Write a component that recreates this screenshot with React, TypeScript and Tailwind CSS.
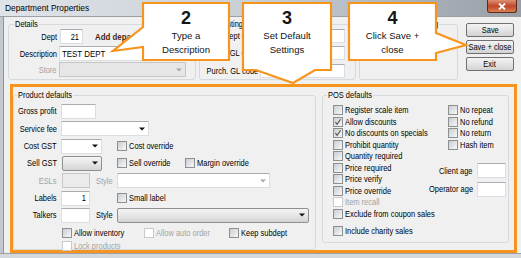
import React from "react";

const FONT = "font-['Liberation_Sans',Arial,sans-serif]";

function T({ children, o = "left", className = "" }: { children?: React.ReactNode; o?: "left" | "right" | "center"; className?: string }) {
  return (
    <span
      className={
        "inline-block shrink-0 whitespace-nowrap scale-x-[0.83] " +
        (o === "right" ? "origin-right " : o === "center" ? "origin-center " : "origin-left ") +
        className
      }
    >
      {children}
    </span>
  );
}

function Lbl({ text, w, disabled = false }: { text: string; w: string; disabled?: boolean }) {
  return (
    <span className={"shrink-0 flex justify-end " + w + (disabled ? " text-[#a3a3a3]" : " text-black")}>
      <T o="right">{text}</T>
    </span>
  );
}

function Cb({ checked = false, disabled = false }: { checked?: boolean; disabled?: boolean }) {
  return (
    <span
      className={
        disabled
          ? "relative block w-[10px] h-[10px] shrink-0 border border-[#c9c9c9] bg-white"
          : "relative block w-[10px] h-[10px] shrink-0 border border-[#8e8f8f] bg-linear-to-br from-[#c9cdd3] to-[#f8f8f8]"
      }
    >
      {checked && (
        <svg className="absolute left-0 top-0" width="8" height="8" viewBox="0 0 8 8">
          <path d="M1.4 4.2 L3.1 6.4 L6.6 1.2" stroke="#505050" strokeWidth="1.1" fill="none" />
        </svg>
      )}
    </span>
  );
}

function Check({
  label,
  checked,
  disabled,
  className = "",
}: {
  label: string;
  checked?: boolean;
  disabled?: boolean;
  className?: string;
}) {
  return (
    <div className={"flex items-center gap-[2px] whitespace-nowrap " + className}>
      <Cb checked={checked} disabled={disabled} />
      <T className={disabled ? "text-[#a3a3a3]" : "text-black"}>{label}</T>
    </div>
  );
}

function Arrow({ grey = false }: { grey?: boolean }) {
  return (
    <svg width="6" height="4" viewBox="0 0 6 4">
      <path d="M0 0.5H6L3 3.5Z" fill={grey ? "#a9a9a9" : "#111"} />
    </svg>
  );
}

function TextBox({ className = "", value, disabled = false }: { className?: string; value?: string; disabled?: boolean }) {
  return (
    <div
      className={
        (disabled
          ? "bg-[#ebebeb] border border-[#c8c8c8] "
          : "bg-white border border-[#dadde3] border-t-[#abadb3] ") +
        "h-[15px] shrink-0 flex items-center justify-end pr-[3px] " +
        className
      }
    >
      {value && <T o="right">{value}</T>}
    </div>
  );
}

function Combo({ className = "", grey = false, fill = false }: { className?: string; grey?: boolean; fill?: boolean }) {
  return (
    <div
      className={
        (fill ? "bg-[#e6e6e6] border border-[#c6c6c6] " : "bg-white border border-[#dadde3] border-t-[#abadb3] ") +
        "h-[15px] shrink-0 flex items-center justify-end pr-[3px] " +
        className
      }
    >
      <Arrow grey={grey} />
    </div>
  );
}

function BtnCombo({ className = "" }: { className?: string }) {
  return (
    <div
      className={
        "h-[15px] shrink-0 flex items-center justify-end pr-[3px] rounded-[2px] border border-[#8e8f8f] bg-linear-to-b from-[#f4f4f4] via-[#e6e6e6] to-[#d4d4d4] " +
        className
      }
    >
      <Arrow />
    </div>
  );
}

function Button({ label }: { label: string }) {
  return (
    <div className="w-[48px] h-[14px] flex items-center justify-center rounded-[2px] border border-[#707070] bg-linear-to-b from-[#f3f3f3] via-[#e5e5e5] to-[#d2d2d2] text-black">
      <T o="center">{label}</T>
    </div>
  );
}

function Row({ label, disabled = false, children }: { label: string; disabled?: boolean; children?: React.ReactNode }) {
  return (
    <div className="h-[17.33px] flex items-center">
      <Lbl text={label} w="w-[43px]" disabled={disabled} />
      <div className="ml-[4px] flex items-center">{children}</div>
    </div>
  );
}

function Legend({ text, w, className = "" }: { text: string; w: string; className?: string }) {
  return (
    <legend className={"px-[1px] leading-[10px] " + className}>
      <span className={"block h-[10px] " + w}>
        <T>{text}</T>
      </span>
    </legend>
  );
}

function Callouts() {
  const o = "#f7941d";
  return (
    <div className="absolute inset-0 pointer-events-none">
      <svg className="absolute left-0 top-0" width="521" height="258" viewBox="0 0 521 258">
        <path d="M143,3 H229 V60 H143 V47 L113,51 L143,27 Z" fill="#fff" stroke={o} strokeWidth="2.2" strokeLinejoin="miter" />
        <path d="M243,3 H331 V70 H315 L293,83 L256,70 H243 Z" fill="#fff" stroke={o} strokeWidth="2.2" strokeLinejoin="miter" />
        <path d="M349,3 H436 V33 L466,45 L436,53 V60 H349 Z" fill="#fff" stroke={o} strokeWidth="2.2" strokeLinejoin="miter" />
      </svg>
      <div className="absolute left-[143px] top-[7px] w-[86px] flex flex-col items-center font-['Liberation_Sans',Arial,sans-serif] text-[#151515]">
        <span className="text-[18px] leading-[22px] font-bold">2</span>
        <span className="text-[9.6px] leading-[14px]">Type a</span>
        <span className="text-[9.6px] leading-[14px]">Description</span>
      </div>
      <div className="absolute left-[243px] top-[7px] w-[88px] flex flex-col items-center font-['Liberation_Sans',Arial,sans-serif] text-[#151515]">
        <span className="text-[18px] leading-[22px] font-bold">3</span>
        <span className="text-[9.6px] leading-[14px]">Set Default</span>
        <span className="text-[9.6px] leading-[14px]">Settings</span>
      </div>
      <div className="absolute left-[349px] top-[7px] w-[87px] flex flex-col items-center font-['Liberation_Sans',Arial,sans-serif] text-[#151515]">
        <span className="text-[18px] leading-[22px] font-bold">4</span>
        <span className="text-[9.6px] leading-[14px]">Click Save +</span>
        <span className="text-[9.6px] leading-[13px]">close</span>
      </div>
    </div>
  );
}

export default function App() {
  return (
    <div className={"relative w-[521px] h-[258px] overflow-hidden bg-[#f0f0f0] text-[9px] leading-[10px] text-black " + FONT}>
      {/* Title bar */}
      <div className="h-[17px] flex items-center justify-between bg-linear-to-r from-[#dfe4e9] via-[#c8ced5] to-[#979ea6] border-b border-[#9aa0a6]">
        <span className="pl-[5px] text-[9.5px] text-black">
          <span className="inline-block whitespace-nowrap origin-left scale-x-[0.88]">Department Properties</span>
        </span>
        <div className="self-start mr-[4px] w-[30px] h-[13px] rounded-b-[3px] border border-t-0 border-[#5e2a1c] bg-linear-to-b from-[#dc9070] via-[#c0452b] to-[#d9804f] flex items-center justify-center">
          <svg width="8" height="7" viewBox="0 0 8 7">
            <path d="M1 0.5 L7 6.5 M7 0.5 L1 6.5" stroke="#fff" strokeWidth="1.8" />
          </svg>
        </div>
      </div>

      {/* Body */}
      <div className="flex h-[236px]">
        <div className="w-[4px] shrink-0 bg-[#c3c8ce] border-r border-[#8d9298]" />
        <div className="flex-1 flex flex-col">
          {/* Top section */}
          <div className="h-[67px] flex items-start">
            <fieldset className="ml-[4px] mt-[2px] w-[188px] h-[61px] border border-[#d5dadf] rounded-[3px]">
              <Legend text="Details" w="w-[23px]" className="ml-[5px]" />
              <div className="flex items-center h-[15px]">
                <Lbl text="Dept" w="w-[48px]" />
                <TextBox className="ml-[3px] w-[23px]" value="21" />
                <span className="ml-[12px] font-bold text-[9.5px] text-[#4a2410]"><T>Add department</T></span>
              </div>
              <div className="flex items-center h-[15px] mt-[2px]">
                <Lbl text="Description" w="w-[48px]" />
                <div className="ml-[2px] w-[127px] h-[15px] bg-white border border-[#dadde3] border-t-[#abadb3] flex items-center pl-[2px] text-[9.5px]">
                  <T>TEST DEPT</T>
                </div>
              </div>
              <div className="flex items-center h-[15px] mt-[1px]">
                <Lbl text="Store" w="w-[48px]" disabled />
                <Combo className="ml-[2px] w-[127px]" grey fill />
              </div>
            </fieldset>

            <fieldset className="ml-[3px] mt-[2px] w-[157px] h-[61px] border border-[#d5dadf] rounded-[3px]">
              <Legend text="Accounting" w="w-[37px]" className="ml-[5px]" />
              <div className="flex items-center h-[14px]">
                <Lbl text="Dept code" w="w-[58px]" />
                <TextBox className="ml-[2px] w-[85px] !h-[14px]" />
              </div>
              <div className="flex items-center h-[14px] mt-[3px]">
                <Lbl text="Sales GL code" w="w-[58px]" />
                <TextBox className="ml-[2px] w-[85px] !h-[14px]" />
              </div>
              <div className="flex items-center h-[14px] mt-[4px]">
                <Lbl text="Purch. GL code" w="w-[58px]" />
                <TextBox className="ml-[2px] w-[85px] !h-[14px]" />
              </div>
            </fieldset>

            <fieldset className="ml-[3px] mt-[2px] w-[99px] h-[61px] border border-[#d5dadf] rounded-[3px]">
              <Legend text="Ordering" w="w-[29px]" className="ml-[48px]" />
            </fieldset>

            <div className="ml-[8px] mt-[6px] flex flex-col gap-[3px]">
              <Button label="Save" />
              <Button label="Save + close" />
              <Button label="Exit" />
            </div>
          </div>

          {/* Orange highlighted area */}
          <div className="ml-[6px] w-[507px] h-[169px] border-[3px] border-[#f7941d] flex items-start pt-[3px]">
            <fieldset className="w-[303px] h-[160px] border border-[#d5dadf] rounded-[3px]">
              <Legend text="Product defaults" w="w-[54px]" className="ml-[3px]" />
              <div className="flex flex-col pt-[2.8px]">
                <Row label="Gross profit">
                  <TextBox className="w-[35px]" />
                </Row>
                <Row label="Service fee">
                  <Combo className="w-[88px]" />
                </Row>
                <Row label="Cost GST">
                  <Combo className="w-[41px]" />
                  <Check className="ml-[15px]" label="Cost override" />
                </Row>
                <Row label="Sell GST">
                  <BtnCombo className="w-[40px] ml-[1px]" />
                  <Check className="ml-[15px] w-[68px]" label="Sell override" />
                  <Check label="Margin override" />
                </Row>
                <Row label="ESLs" disabled>
                  <TextBox className="w-[28px] ml-[1px]" disabled />
                  <span className="ml-[6px] w-[21px] text-[#a3a3a3]"><T>Style</T></span>
                  <Combo className="w-[153px]" grey />
                </Row>
                <Row label="Labels">
                  <TextBox className="w-[29px]" value="1" />
                  <Check className="ml-[27px]" label="Small label" />
                </Row>
                <Row label="Talkers">
                  <TextBox className="w-[29px]" />
                  <span className="ml-[6px] w-[21px]"><T>Style</T></span>
                  <BtnCombo className="w-[192px]" />
                </Row>
                <div className="flex items-center h-[10px] mt-[4.4px] pl-[48px]">
                  <Check className="w-[82px]" label="Allow inventory" />
                  <Check className="w-[85px]" label="Allow auto order" disabled />
                  <Check label="Keep subdept" />
                </div>
                <div className="flex items-center h-[10px] mt-[2.5px] pl-[48px]">
                  <Check label="Lock products" disabled />
                </div>
              </div>
            </fieldset>

            <fieldset className="ml-[6px] w-[187px] h-[153px] border border-[#d5dadf] rounded-[3px]">
              <Legend text="POS defaults" w="w-[44px]" className="ml-[4px]" />
              <div className="flex pt-[4.25px] pl-[10px]">
                <div className="w-[92px] flex flex-col">
                  <div className="h-[11.5px] flex items-center"><Check label="Register scale item" /></div>
                  <div className="h-[11.5px] flex items-center"><Check label="Allow discounts" checked /></div>
                  <div className="h-[11.5px] flex items-center"><Check label="No discounts on specials" checked /></div>
                  <div className="h-[11.5px] flex items-center"><Check label="Prohibit quantity" /></div>
                  <div className="h-[11.5px] flex items-center"><Check label="Quantity required" /></div>
                  <div className="h-[11.5px] flex items-center"><Check label="Price required" /></div>
                  <div className="h-[11.5px] flex items-center"><Check label="Price verify" /></div>
                  <div className="h-[11.5px] flex items-center"><Check label="Price override" /></div>
                  <div className="h-[11.5px] flex items-center"><Check label="Item recall" disabled /></div>
                  <div className="h-[11.5px] flex items-center"><Check label="Exclude from coupon sales" /></div>
                  <div className="h-[11.5px] mt-[5.7px] flex items-center"><Check label="Include charity sales" /></div>
                </div>
                <div className="w-[81px] flex flex-col">
                  <div className="h-[11.5px] flex items-center pl-[23px]"><Check label="No repeat" /></div>
                  <div className="h-[11.5px] flex items-center pl-[23px]"><Check label="No refund" /></div>
                  <div className="h-[11.5px] flex items-center pl-[23px]"><Check label="No return" /></div>
                  <div className="h-[11.5px] flex items-center pl-[23px]"><Check label="Hash item" /></div>
                  <div className="h-[15px] mt-[12.75px] flex items-center justify-end gap-[4px]">
                    <Lbl text="Client age" w="w-[40px]" />
                    <TextBox className="w-[29px]" />
                  </div>
                  <div className="h-[15px] mt-[3.5px] flex items-center justify-end gap-[4px]">
                    <Lbl text="Operator age" w="w-[46px]" />
                    <TextBox className="w-[29px]" />
                  </div>
                </div>
              </div>
            </fieldset>
          </div>
        </div>
      </div>
      <div className="h-[5px] bg-[#d4d9de] border-t border-[#9aa0a6]" />

      <Callouts />
    </div>
  );
}
